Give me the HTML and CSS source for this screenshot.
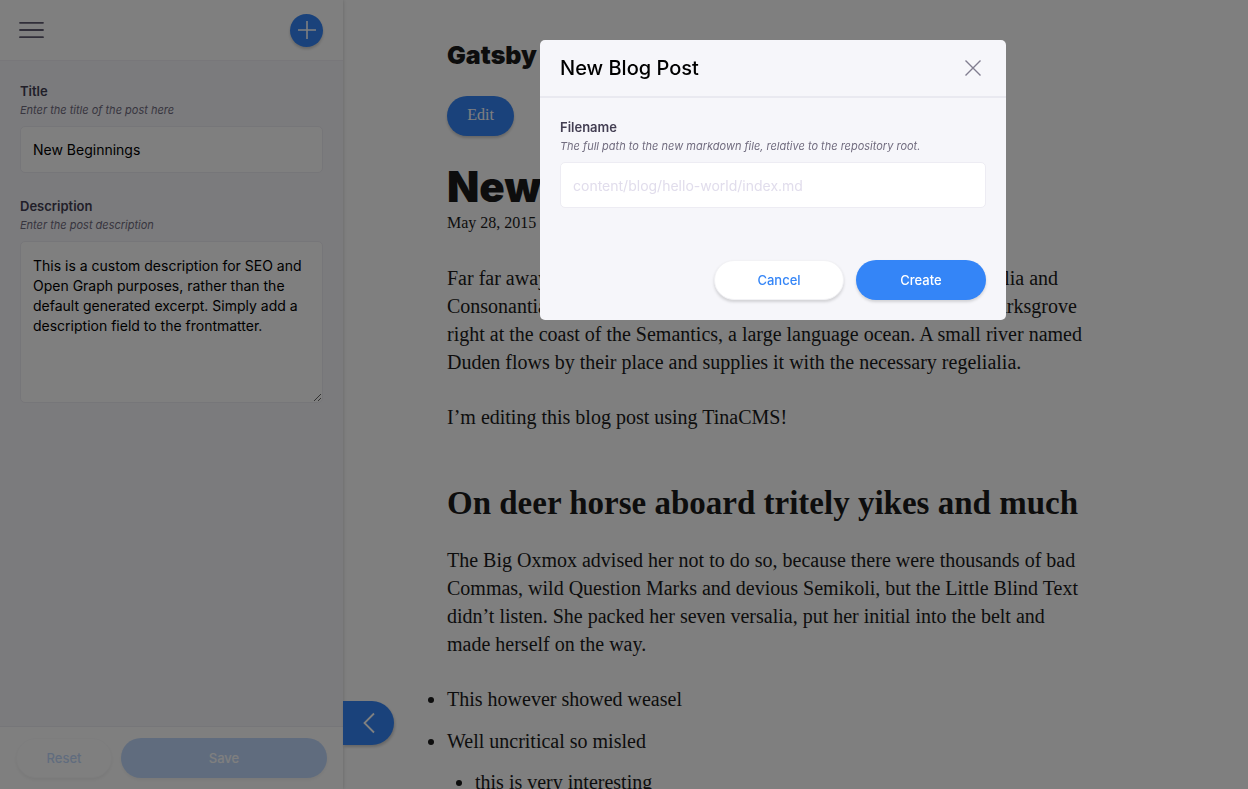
FILE: index.html
```html
<!DOCTYPE html>
<html lang="en">
<head>
<meta charset="utf-8">
<meta name="viewport" content="width=device-width, initial-scale=1">
<title>New Beginnings</title>
<link rel="stylesheet" href="styles.css">
</head>
<body>
<div class="app">
  <aside class="sidebar">
    <header class="sidebar-header">
      <button class="menu-button" type="button" aria-label="Menu">
        <svg width="25" height="18" viewBox="0 0 25 18" fill="none" stroke="#615c72" stroke-width="1.800" stroke-linecap="round"><path d="M1 1.800h23M1 9h23M1 16.200h23"/></svg>
      </button>
      <button class="add-button" type="button" aria-label="New post">
        <svg width="20" height="20" viewBox="0 0 20 20" fill="none" stroke="#fff" stroke-width="1.600"><path d="M10 1v18M1 10h18"/></svg>
      </button>
    </header>
    <form class="sidebar-form">
      <div class="field">
        <label class="label" for="title">Title</label>
        <p class="help">Enter the title of the post here</p>
        <input class="input" id="title" type="text" value="New Beginnings">
      </div>
      <div class="field">
        <label class="label" for="description">Description</label>
        <p class="help">Enter the post description</p>
        <textarea class="input textarea" id="description">This is a custom description for SEO and Open Graph purposes, rather than the default generated excerpt. Simply add a description field to the frontmatter.</textarea>
      </div>
    </form>
    <footer class="sidebar-footer">
      <button class="button button-plain reset" type="button" disabled>Reset</button>
      <button class="button button-primary save" type="button" disabled>Save</button>
    </footer>
    <button class="toggle" type="button" aria-label="Collapse sidebar">
      <svg width="14" height="22" viewBox="0 0 14 22" fill="none" stroke="#fff" stroke-width="1.800"><path d="M12 1.500L2.500 11 12 20.500"/></svg>
    </button>
  </aside>
  <main class="preview">
    <div class="article">
      <h3 class="site-name">Gatsby Starter Blog</h3>
      <button class="button-edit" type="button">Edit</button>
      <h1 class="post-title">New Beginnings</h1>
      <p class="date">May 28, 2015</p>
      <p class="text">Far far away, behind the word mountains, far from the countries Vokalia and<br>Consonantia, there live the blind texts. Separated they live in Bookmarksgrove<br>right at the coast of the Semantics, a large language ocean. A small river named<br>Duden flows by their place and supplies it with the necessary regelialia.</p>
      <p class="text">I’m editing this blog post using TinaCMS!</p>
      <h2 class="section-title">On deer horse aboard tritely yikes and much</h2>
      <p class="text">The Big Oxmox advised her not to do so, because there were thousands of bad<br>Commas, wild Question Marks and devious Semikoli, but the Little Blind Text<br>didn’t listen. She packed her seven versalia, put her initial into the belt and<br>made herself on the way.</p>
      <ul class="list">
        <li>This however showed weasel</li>
        <li>Well uncritical so misled
          <ul class="list">
            <li>this is very interesting</li>
          </ul>
        </li>
      </ul>
    </div>
  </main>
</div>
<div class="overlay">
  <section class="modal" role="dialog" aria-modal="true" aria-labelledby="modal-title">
    <header class="modal-header">
      <h2 class="modal-title" id="modal-title">New Blog Post</h2>
      <button class="close" type="button" aria-label="Close">
        <svg width="18" height="18" viewBox="0 0 18 18" fill="none" stroke="#817d90" stroke-width="1.400"><path d="M1.500 1.500l15 15M16.500 1.500l-15 15"/></svg>
      </button>
    </header>
    <form class="modal-form">
      <label class="label" for="filename">Filename</label>
      <p class="help">The full path to the new markdown file, relative to the repository root.</p>
      <input class="input" id="filename" type="text" placeholder="content/blog/hello-world/index.md">
    </form>
    <footer class="modal-actions">
      <button class="button button-plain" type="button">Cancel</button>
      <button class="button button-primary" type="button">Create</button>
    </footer>
  </section>
</div>
</body>
</html>
```
FILE: styles.css
```css
* {
  box-sizing: border-box;
}

body {
  margin: 0;
  font-family: Inter, "Liberation Sans", sans-serif;
  color: #000;
}

h1, h2, h3, p, ul {
  margin: 0;
}

button {
  padding: 0;
  border: 0;
  background: none;
  font: inherit;
}

svg {
  display: block;
}

.app {
  display: flex;
  height: 100vh;
  overflow: hidden;
}

/* Sidebar */
.sidebar {
  position: relative;
  z-index: 1;
  display: flex;
  flex: none;
  flex-direction: column;
  width: 343px;
  background: #f6f6fa;
  box-shadow: 0 0 4px rgba(0, 0, 0, 0.2);
}

.sidebar-header {
  display: flex;
  align-items: center;
  justify-content: space-between;
  height: 61px;
  padding: 0 20px 0 19px;
  background: #fff;
  border-bottom: 1px solid #f0eff5;
}

.add-button {
  display: grid;
  place-items: center;
  width: 33px;
  height: 33px;
  border-radius: 50%;
  background: #3485f7;
  box-shadow: 0 2px 3px rgba(0, 0, 0, 0.2);
}

.sidebar-form {
  display: flex;
  flex: 1;
  flex-direction: column;
  gap: 24px;
  padding: 21px 20px 20px;
}

.label {
  display: block;
  font-size: 13px;
  font-weight: 600;
  line-height: 18px;
  color: #433e52;
}

.help {
  margin-bottom: 6px;
  font-size: 11px;
  font-style: italic;
  line-height: 20px;
  color: #716c7f;
}

.input {
  display: block;
  width: 100%;
  height: 47px;
  padding: 0 12px;
  border: 1px solid #edecf3;
  border-radius: 5px;
  background: #fff;
  font-family: inherit;
  font-size: 14px;
  line-height: 20px;
  color: #000;
}

.input::placeholder {
  color: #e1ddec;
  opacity: 1;
}

.textarea {
  height: 162px;
  padding: 14px 12px;
  resize: vertical;
}

.sidebar-footer {
  display: flex;
  gap: 9px;
  padding: 11px 16px;
  background: #fff;
  border-top: 1px solid #edecf3;
}

.button {
  height: 40px;
  border-radius: 20px;
  font-size: 13px;
  font-weight: 500;
  box-shadow: 0 2px 3px rgba(0, 0, 0, 0.15);
}

.button:disabled {
  opacity: 0.3;
}

.button-plain {
  border: 1px solid #f2f2f5;
  background: #fff;
  color: #3485f7;
}

.button-primary {
  background: #3485f7;
  color: #fff;
}

.reset {
  flex: none;
  width: 96px;
}

.save {
  flex: 1;
}

.toggle {
  position: absolute;
  bottom: 44px;
  left: 100%;
  display: grid;
  place-items: center;
  width: 51px;
  height: 44px;
  border-radius: 0 22px 22px 0;
  background: #3485f7;
  box-shadow: 1px 2px 3px rgba(0, 0, 0, 0.2);
}

/* Post preview */
.preview {
  flex: 1;
  min-width: 0;
  overflow: hidden;
  background: #fff;
  font-family: "Liberation Serif", serif;
  color: #1a1a1a;
}

.article {
  max-width: 760px;
  padding: 40px 20px 0 104px;
}

.site-name {
  font-family: Inter, sans-serif;
  font-size: 25px;
  font-weight: 900;
  line-height: 30px;
}

.button-edit {
  display: block;
  width: 67px;
  height: 40px;
  margin-top: 26px;
  padding-bottom: 2px;
  border-radius: 20px;
  background: #3485f7;
  font-size: 16px;
  color: #fff;
  box-shadow: 0 2px 3px rgba(0, 0, 0, 0.2);
}

.post-title {
  margin-top: 28px;
  font-family: Inter, sans-serif;
  font-size: 42px;
  font-weight: 900;
  line-height: 46px;
}

.date {
  margin-bottom: 28px;
  font-size: 16px;
  line-height: 26px;
}

.text {
  margin-bottom: 27px;
  font-size: 20px;
  line-height: 28px;
  white-space: nowrap;
}

.section-title {
  margin: 54px 0 25px;
  font-size: 33px;
  line-height: 36px;
  white-space: nowrap;
}

.list {
  padding: 0;
  font-size: 20px;
  line-height: 28px;
  list-style: disc;
}

.list li {
  margin-bottom: 14px;
}

.list .list {
  margin-top: 13px;
  padding-left: 28px;
}

/* Modal */
.overlay {
  position: fixed;
  inset: 0;
  z-index: 2;
  display: flex;
  align-items: flex-start;
  justify-content: center;
  padding: 40px 0 0 298px;
  background: rgba(0, 0, 0, 0.5);
}

.modal {
  width: 466px;
  border-radius: 5px;
  background: #f6f6fa;
}

.modal-header {
  display: flex;
  align-items: center;
  justify-content: space-between;
  height: 58px;
  padding: 0 24px 0 20px;
  border-bottom: 2px solid #e9e9f0;
}

.modal-title {
  font-size: 20px;
  font-weight: 500;
  line-height: 28px;
}

.modal-form {
  padding: 20px 20px 52px;
}

.modal-form .input {
  height: 46px;
}

.modal-actions {
  display: flex;
  justify-content: flex-end;
  gap: 12px;
  padding: 0 20px 20px;
}

.modal-actions .button {
  width: 130px;
}
```
